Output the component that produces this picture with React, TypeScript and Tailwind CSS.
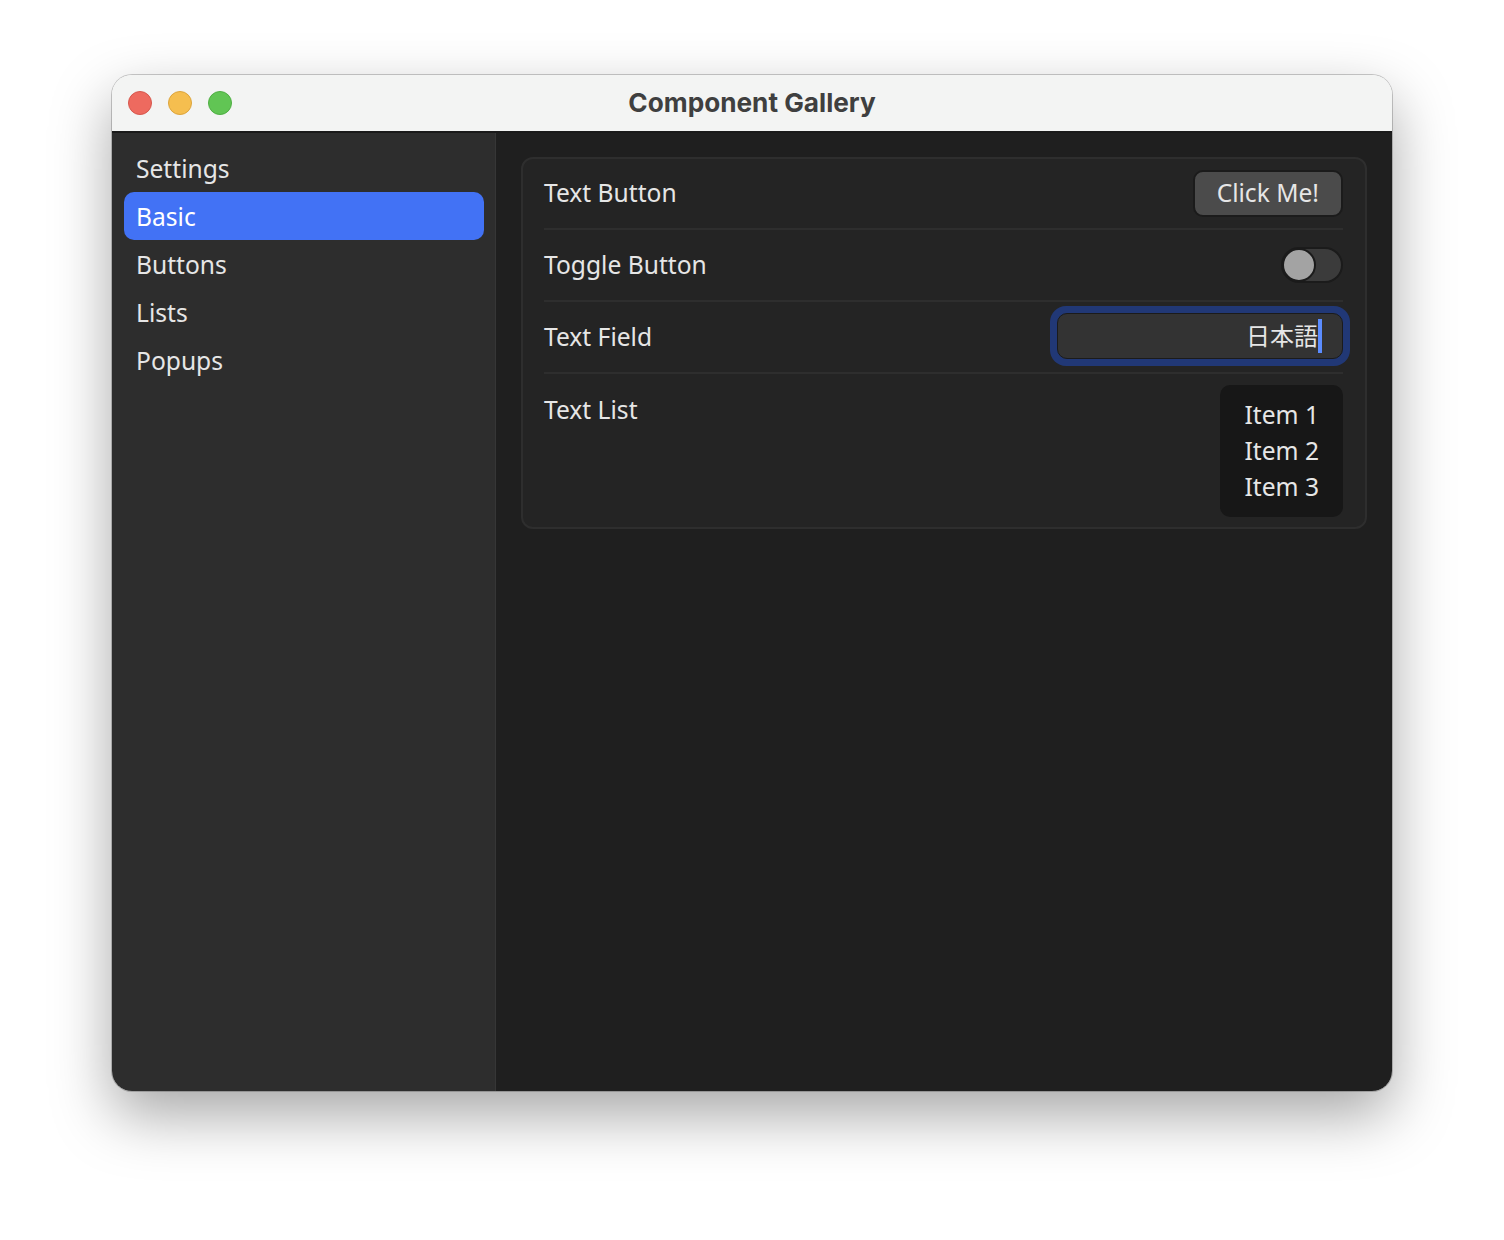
import type { ReactNode } from "react";

const sidebarItems = ["Settings", "Basic", "Buttons", "Lists", "Popups"];

export default function App() {
  return (
    <div className="min-h-screen bg-white pt-[75px] pl-[112px] [font-family:'Noto_Sans','Noto_Sans_CJK_JP',sans-serif]">
      <div className="w-[1280px] h-[1016px] rounded-[20px] overflow-hidden flex flex-col shadow-[0_24px_60px_rgba(0,0,0,0.35)] ring-1 ring-black/20">
        <TitleBar />
        <div className="flex flex-1 min-h-0">
          <Sidebar active="Basic" />
          <main className="flex-1 bg-[#1f1f1f] pt-6 px-[25px]">
            <div className="rounded-xl border-2 border-[#2e2e2e] bg-[#242424] pl-[21px] pr-[22px] pb-[10px]">
              <Row label="Text Button" height="h-[71px]">
                <button className="h-[47px] px-[22px] rounded-[10px] border-2 border-[#1b1b1b] bg-[#4b4b4b] text-[24.6px] text-[#e6e6e6]">
                  Click Me!
                </button>
              </Row>
              <Row label="Toggle Button">
                <Toggle />
              </Row>
              <Row label="Text Field">
                <TextField value="日本語" />
              </Row>
              <div className="flex items-start justify-between pt-[11px]">
                <span className="mt-[7px] text-[24.6px] leading-9 text-[#e6e6e6]">Text List</span>
                <ul className="rounded-[10px] bg-[#171717] px-6 pt-[12px] pb-[12px]">
                  {["Item 1", "Item 2", "Item 3"].map((it) => (
                    <li key={it} className="text-[24.6px] leading-9 text-[#e6e6e6]">
                      {it}
                    </li>
                  ))}
                </ul>
              </div>
            </div>
          </main>
        </div>
      </div>
    </div>
  );
}

function TitleBar() {
  return (
    <div className="relative h-[58px] shrink-0 bg-[#f3f4f3] border-b-2 border-[#1a1a1a] flex items-center justify-center">
      <div className="absolute left-[16px] top-[16px] flex gap-4">
        <span className="w-6 h-6 rounded-full bg-[#ee6a5f] border border-[#d6574d]" />
        <span className="w-6 h-6 rounded-full bg-[#f5be4f] border border-[#dca43c]" />
        <span className="w-6 h-6 rounded-full bg-[#61c554] border border-[#4fae43]" />
      </div>
      <h1 className="text-[26.2px] font-bold text-[#3f3f3f] [font-family:Inter,'Liberation_Sans',sans-serif]">
        Component Gallery
      </h1>
    </div>
  );
}

function Sidebar({ active }: { active: string }) {
  return (
    <nav className="w-[384px] shrink-0 bg-[#2d2d2d] border-r border-[#363636] pl-3 pr-[11px] pt-[11px]">
      {sidebarItems.map((item) => (
        <div
          key={item}
          className={`h-12 flex items-center px-3 pt-[2px] rounded-[10px] text-[24.6px] ${
            item === active ? "bg-[#4272f5] text-white" : "text-[#e6e6e6]"
          }`}
        >
          {item}
        </div>
      ))}
    </nav>
  );
}

function Row({
  label,
  children,
  height = "h-[72px]",
}: {
  label: string;
  children: ReactNode;
  height?: string;
}) {
  return (
    <div className={`${height} flex items-center justify-between border-b-2 border-[#2e2e2e]`}>
      <span className="text-[24.6px] text-[#e6e6e6]">{label}</span>
      {children}
    </div>
  );
}

function Toggle() {
  return (
    <div className="relative w-[62px] h-[36px] rounded-full bg-[#3b3b3b] border-2 border-[#1b1b1b]">
      <span className="absolute -left-[1px] -top-[1px] w-[34px] h-[34px] rounded-full bg-[#a3a3a3] border-2 border-[#1b1b1b]" />
    </div>
  );
}

function TextField({ value }: { value: string }) {
  return (
    <div className="-mr-[7px] -mt-[2px] rounded-[16px] bg-[#213876] p-[7px]">
      <div className="w-[286px] h-[46px] rounded-[10px] bg-[#333333] border border-[#1b1b1b] flex items-center justify-end pr-[20px]">
        <span className="text-[24px] text-[#e6e6e6]">{value}</span>
        <span className="w-[4px] h-[34px] bg-[#5b8cff]" />
      </div>
    </div>
  );
}
